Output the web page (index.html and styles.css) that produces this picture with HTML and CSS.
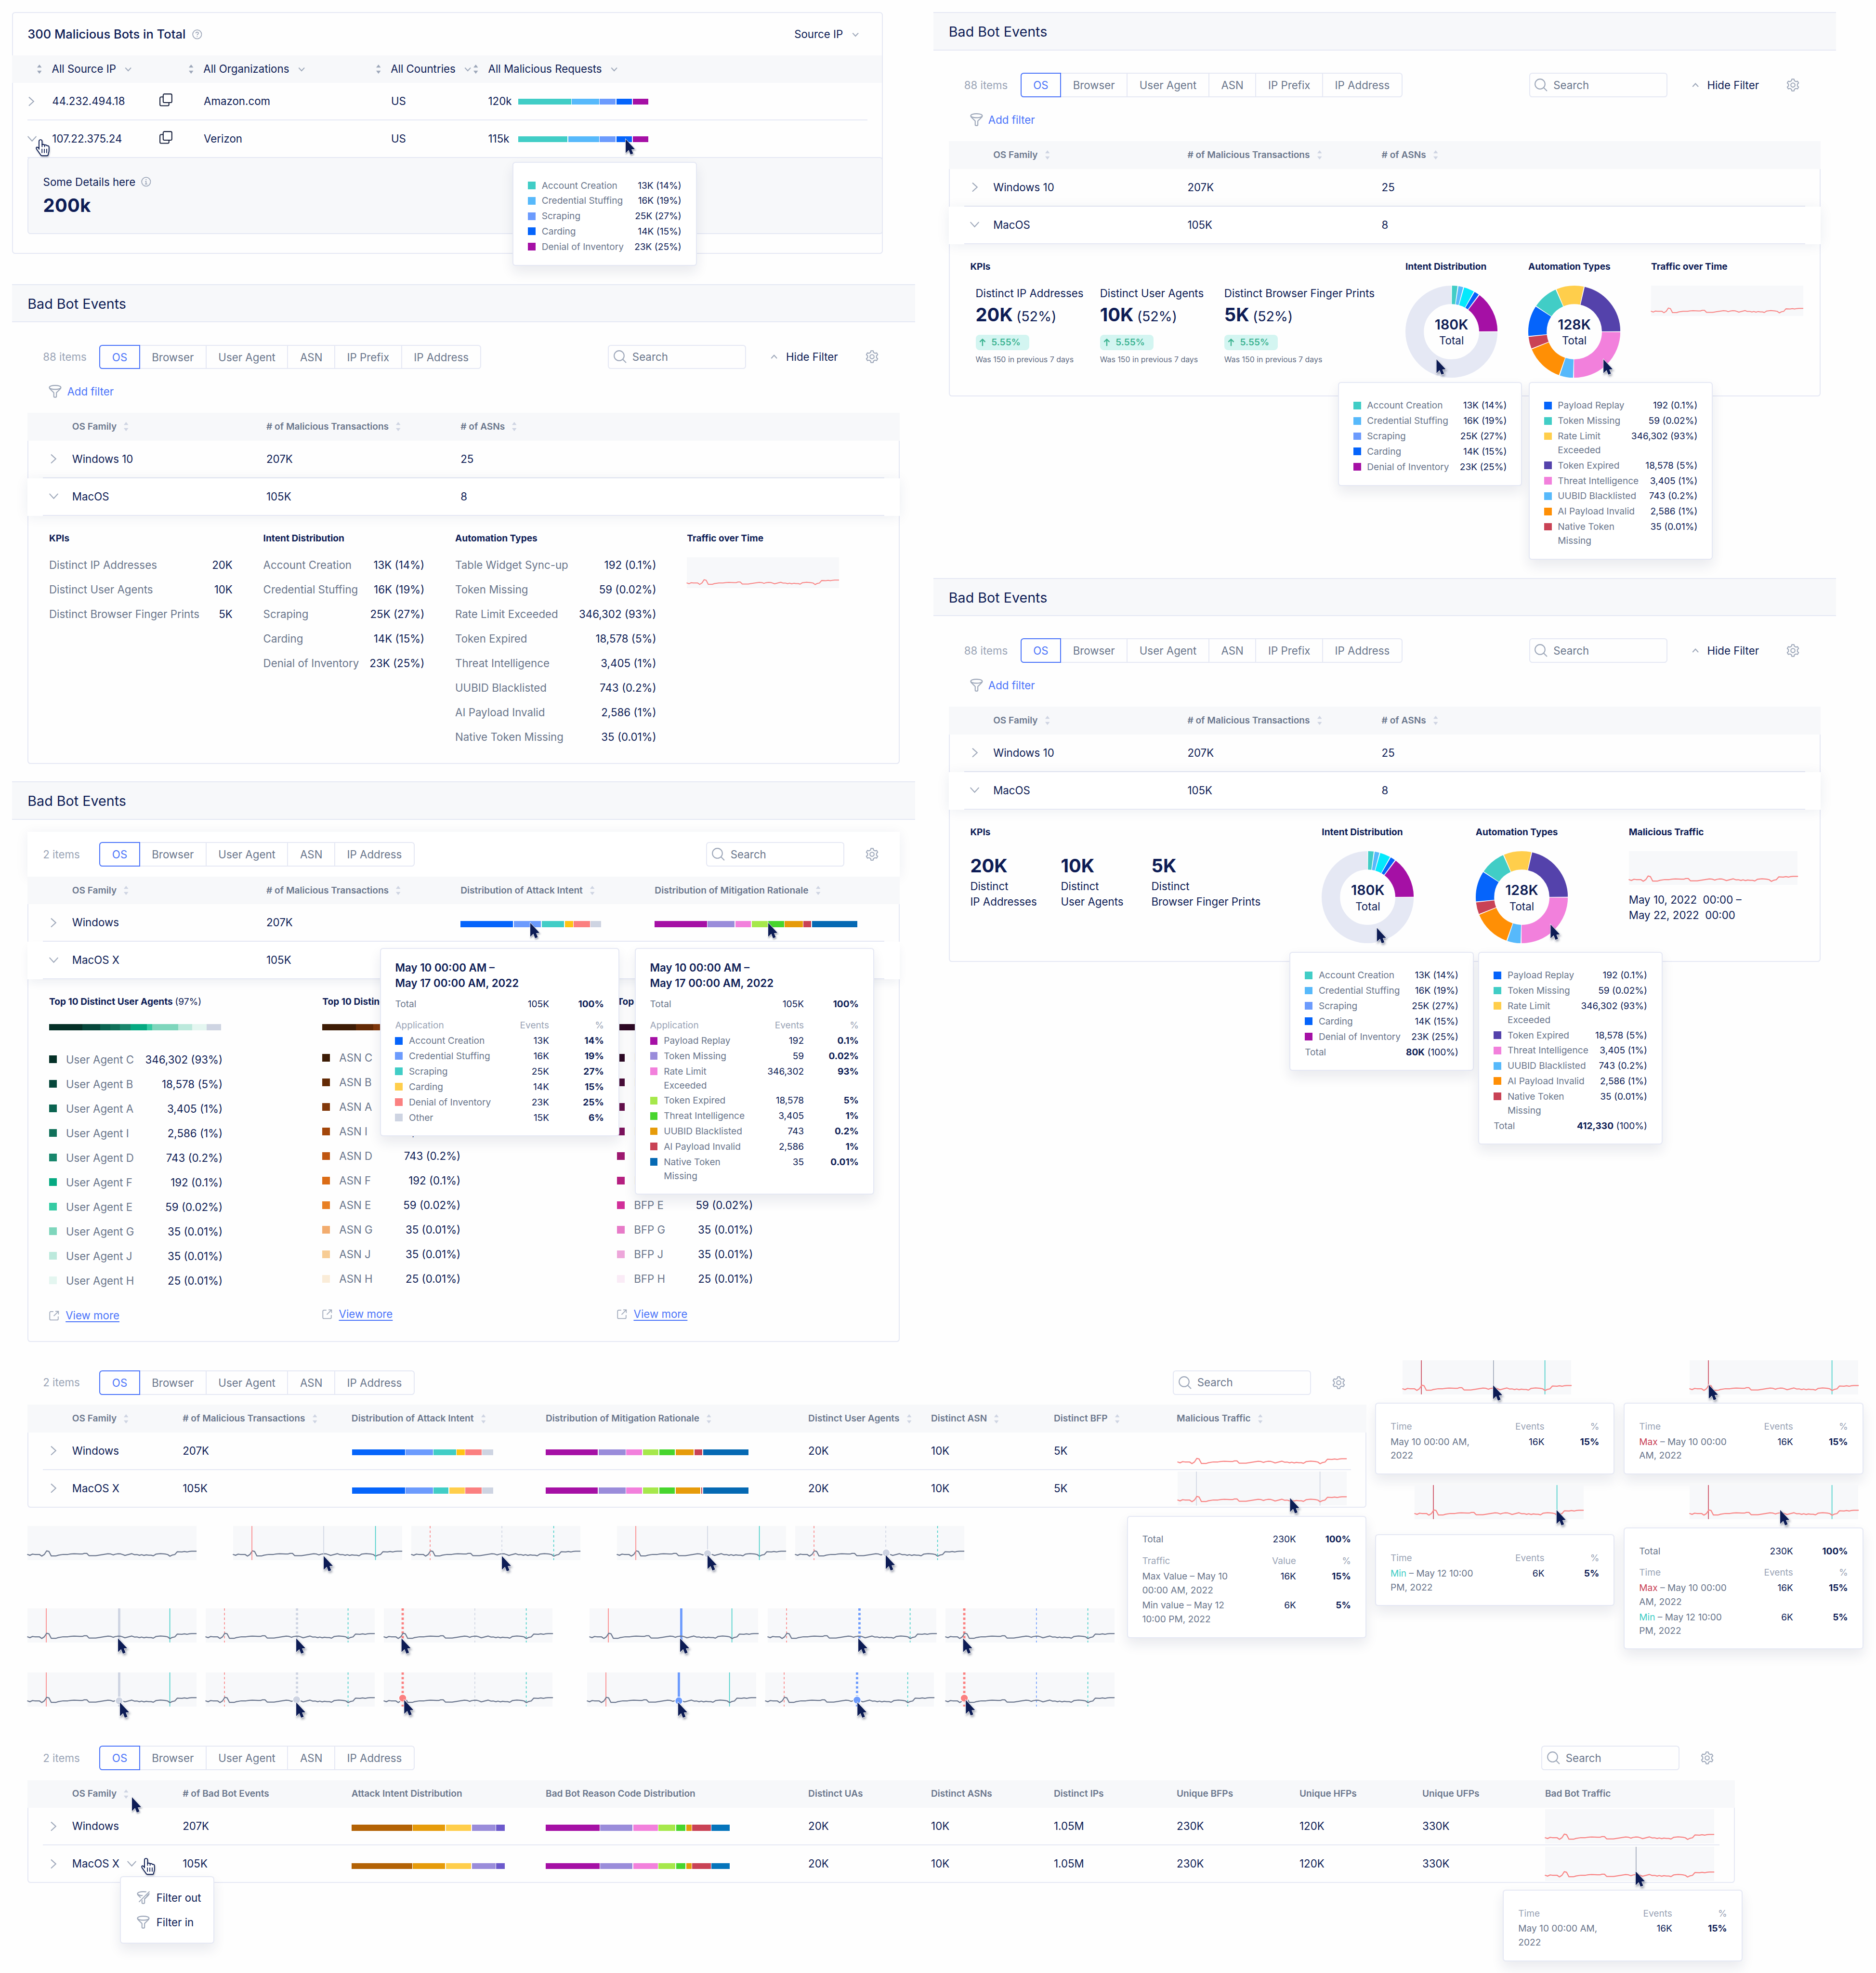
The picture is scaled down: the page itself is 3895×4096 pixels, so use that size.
FILE: index.html
```html
<!DOCTYPE html>
<html lang="en">
<head>
<meta charset="utf-8">
<title>Bad Bot Events</title>
<link rel="stylesheet" href="styles.css">
</head>
<body>
<svg class="defs" aria-hidden="true">
  <symbol id="line" viewBox="0 0 1320 266" overflow="visible"><path fill="none" stroke-width="8.4" stroke-linejoin="round" d="M-2 221 0 222 19 229 38 220 56 222H93L112 235 132 222 150 194 168 199 186 234H222L241 228 279 222H316L336 219 364 217 409 219H429L444 214H464L482 232H534L564 227 629 217 652 219 670 226 688 220 709 217 729 218 744 223 762 230 816 216 836 224 856 223 876 229 892 224 911 230 929 225 947 228H967L984 233 1004 220 1040 216 1076 219 1096 223 1114 236 1132 227 1152 223 1171 201 1207 203 1227 199 1247 203 1264 199 1284 197H1322"/></symbol>
  <symbol id="arrow" viewBox="0 0 12 20" overflow="visible"><path d="M0 0 12 12.9 7.6 13.3 9.8 18.7 6.3 20 4 14.2 0 18Z"/></symbol>
  <symbol id="hand" viewBox="0 0 18 22" overflow="visible"><path fill="#fff" stroke="#0b1b50" stroke-width="1.2" stroke-linejoin="round" stroke-linecap="round" d="M4.4 13V2.7a2 2 0 0 1 4 0V7.4c.6-1 2.8-.9 3.3.5.8-.9 2.6-.6 3 .7 1.3-.4 2.7.2 2.700 1.500V15c0 1.800-.8 3-1 4.500-.1 1.200-.7 2-1.600 2H8.300c-.8 0-1.300-.3-1.700-1L1.300 13c-.8-1.300-.6-2.100 0-2.500.8-.4 1.700 0 3.100 1.700"/><path fill="none" stroke="#0b1b50" stroke-width="1.1" stroke-linecap="round" d="M8.400 7V9.800M8.300 13V17.500M11.400 13V17.500M14.400 13V17.500M11.700 8V9.800"/></symbol>
  <symbol id="right" viewBox="0 0 8 12" overflow="visible"><path d="M1 .7 6.800 6 1 11.300"/></symbol>
  <symbol id="down" viewBox="0 0 12 8" overflow="visible"><path d="M.8 1 6 6.700 11.200 1"/></symbol>
  <symbol id="small-down" viewBox="0 0 9 6" overflow="visible"><path d="M.8 1 4.500 5 8.200 1"/></symbol>
  <symbol id="small-up" viewBox="0 0 9 6" overflow="visible"><path d="M.8 5 4.500 1 8.200 5"/></symbol>
  <symbol id="sort" viewBox="0 0 6 12"><path stroke="none" d="M3 0 6 4H0ZM3 12 0 8H6Z"/></symbol>
  <symbol id="gear" viewBox="-8.500 -8.500 17 17"><path stroke-linejoin="round" d="M-1.900-5.600-1.400-7.700H1.400L1.900-5.600 3.900-4.450 5.970-5.060 7.370-2.640 5.800-1.160V1.160L7.370 2.640 5.970 5.060 3.900 4.450 1.900 5.600 1.400 7.700H-1.400L-1.900 5.600-3.900 4.450-5.970 5.060-7.370 2.640-5.800 1.160V-1.160L-7.370-2.640-5.970-5.060-3.900-4.450Z"/><circle r="2.700"/></symbol>
  <symbol id="search" viewBox="0 0 17 17"><circle cx="7.200" cy="7.200" r="6.500"/><path d="M11.800 11.800 16.300 16.300"/></symbol>
  <symbol id="funnel" viewBox="0 0 16.500 17"><ellipse cx="8.200" cy="3.300" rx="7.500" ry="2.600"/><path d="M.7 3.400c0 .9.5 1.500 1.200 2.200l4.600 4.600v5c0 .6.3.9.8.9h1.800c.5 0 .8-.3.8-.9v-5l4.600-4.600c.7-.7 1.200-1.300 1.200-2.200"/></symbol>
  <symbol id="funnel-off" viewBox="0 0 16.500 17" overflow="visible"><ellipse cx="8.200" cy="3.300" rx="7.500" ry="2.600"/><path d="M.7 3.400c0 .9.5 1.500 1.200 2.200l4.600 4.600v5c0 .6.3.9.8.9h1.800c.5 0 .8-.3.8-.9v-5l4.600-4.600c.7-.7 1.200-1.300 1.200-2.200"/><path stroke="#fff" stroke-width="3.600" d="M2.200 13.500 15.700 0"/><path d="M2.600 14.200 16.400.4M9.900 10.200l4.600-4.600"/></symbol>
  <symbol id="copy" viewBox="0 0 17 17"><rect x="4.900" y=".7" width="11.300" height="11.200" rx="1.600"/><path d="M4.900 4.500H2.300C1.400 4.500.7 5.200.7 6.100v8.300c0 .9.7 1.600 1.600 1.600h8.500c.9 0 1.600-.7 1.600-1.600V12"/></symbol>
  <symbol id="help" viewBox="0 0 13 13"><circle cx="6.500" cy="6.500" r="5.800"/><path d="M4.800 5.200C4.800 3 8.200 3 8.200 5.100 8.200 6.300 6.500 6.300 6.500 7.700M6.500 9V10"/></symbol>
  <symbol id="info" viewBox="0 0 13 13"><circle cx="6.500" cy="6.500" r="5.800"/><path d="M6.500 3.200V4.400M5.200 6H6.500V9.400M5 9.500H8"/></symbol>
  <symbol id="open" viewBox="0 0 13 13"><path d="M5.500 1.200H2.200c-.8 0-1.400.6-1.400 1.400v8.200c0 .8.6 1.400 1.400 1.400h8.200c.8 0 1.400-.6 1.400-1.400V7.500M8.200.8H12.200V4.800M12 1 6 7"/></symbol>
  <symbol id="up" viewBox="0 0 10 10"><path d="M5 9.500V1M1.500 4.300 5 .9 8.500 4.300"/></symbol>
  <symbol id="donut-intent" viewBox="0 0 120 120">
    <g fill="none" stroke-width="24" transform="rotate(-90 60 60)">
      <circle cx="60" cy="60" r="48" pathLength="360" stroke="#e5e8f4" stroke-dasharray="268.800 91.200" stroke-dashoffset="-90.600"/>
      <circle cx="60" cy="60" r="48" pathLength="360" stroke="#41cdc6" stroke-dasharray="7 353" stroke-dashoffset="-.6"/>
      <circle cx="60" cy="60" r="48" pathLength="360" stroke="#57b9fb" stroke-dasharray="6 354" stroke-dashoffset="-8.800"/>
      <circle cx="60" cy="60" r="48" pathLength="360" stroke="#05e9fc" stroke-dasharray="13 347" stroke-dashoffset="-16"/>
      <circle cx="60" cy="60" r="48" pathLength="360" stroke="#0564fb" stroke-dasharray="6 354" stroke-dashoffset="-30.200"/>
      <circle cx="60" cy="60" r="48" pathLength="360" stroke="#a510a5" stroke-dasharray="51.800 308.200" stroke-dashoffset="-37.600"/>
    </g>
  </symbol>
  <symbol id="donut-types" viewBox="0 0 120 120">
    <g fill="none" stroke-width="24" transform="rotate(-90 60 60)">
      <circle cx="60" cy="60" r="48" pathLength="360" stroke="#f280dc" stroke-dasharray="89.800 270.200" stroke-dashoffset="-90.600"/>
      <circle cx="60" cy="60" r="48" pathLength="360" stroke="#57b9fb" stroke-dasharray="16.800 343.200" stroke-dashoffset="-181.600"/>
      <circle cx="60" cy="60" r="48" pathLength="360" stroke="#ff8f05" stroke-dasharray="47.800 312.200" stroke-dashoffset="-199.600"/>
      <circle cx="60" cy="60" r="48" pathLength="360" stroke="#c94255" stroke-dasharray="14.800 345.200" stroke-dashoffset="-248.600"/>
      <circle cx="60" cy="60" r="48" pathLength="360" stroke="#0564fb" stroke-dasharray="38.400 321.600" stroke-dashoffset="-264.600"/>
      <circle cx="60" cy="60" r="48" pathLength="360" stroke="#41cdc6" stroke-dasharray="31.800 328.200" stroke-dashoffset="-304.200"/>
      <circle cx="60" cy="60" r="48" pathLength="360" stroke="#ffce4b" stroke-dasharray="34.700 325.300" stroke-dashoffset="-337.200"/>
      <circle cx="60" cy="60" r="48" pathLength="360" stroke="#5442ab" stroke-dasharray="76.300 283.700" stroke-dashoffset="-13.100"/>
    </g>
  </symbol>
</svg>

<main class="canvas">
<div class="columns">
  <div class="column">

    <section class="bots">
      <header class="bots-title"><b>300 Malicious Bots in Total</b><svg class="ic i13"><use href="#help"/></svg><span class="select">Source IP<svg class="ic i-sd"><use href="#small-down"/></svg></span></header>
      <div class="bots-head">
        <span><svg class="ic i-sort"><use href="#sort"/></svg>All Source IP<svg class="ic i-sd"><use href="#small-down"/></svg></span>
        <span><svg class="ic i-sort"><use href="#sort"/></svg>All Organizations<svg class="ic i-sd"><use href="#small-down"/></svg></span>
        <span><svg class="ic i-sort"><use href="#sort"/></svg>All Countries<svg class="ic i-sd"><use href="#small-down"/></svg></span>
        <span><svg class="ic i-sort"><use href="#sort"/></svg>All Malicious Requests<svg class="ic i-sd"><use href="#small-down"/></svg></span>
      </div>
      <div class="bots-row">
        <svg class="ic i-right"><use href="#right"/></svg><span>44.232.494.18</span><svg class="ic i17 dark"><use href="#copy"/></svg><span>Amazon.com</span><span>US</span>
        <span class="req">120k<span class="bar"><i class="teal" style="width:6.85rem"></i><i class="sky" style="width:3.55rem"></i><i class="peri" style="width:2.05rem"></i><i class="blue" style="width:2.05rem"></i><i class="purple" style="width:2.05rem"></i></span></span>
      </div>
      <div class="bots-row">
        <svg class="ic i-down"><use href="#down"/></svg><span>107.22.375.24</span><svg class="ic i17 dark"><use href="#copy"/></svg><span>Verizon</span><span>US</span>
        <span class="req">115k<span class="bar"><i class="teal" style="width:6.4rem"></i><i class="sky" style="width:4rem"></i><i class="peri" style="width:2.05rem"></i><i class="blue" style="width:2.05rem"></i><i class="purple" style="width:2.05rem"></i></span></span>
      </div>
      <div class="bots-detail"><p>Some Details here<svg class="ic i13"><use href="#info"/></svg></p><strong>200k</strong></div>
      <svg class="hand at-bots-hand"><use href="#hand"/></svg>
      <div class="tip tip-s at-bots-tip">
        <p><i class="teal"></i><span>Account Creation</span><em>13K (14%)</em></p>
        <p><i class="sky"></i><span>Credential Stuffing</span><em>16K (19%)</em></p>
        <p><i class="peri"></i><span>Scraping</span><em>25K (27%)</em></p>
        <p><i class="blue"></i><span>Carding</span><em>14K (15%)</em></p>
        <p><i class="purple"></i><span>Denial of Inventory</span><em>23K (25%)</em></p>
      </div>
      <svg class="arrow at-bots-arrow"><use href="#arrow"/></svg>
    </section>

    <section class="board board-lists">
      <h2 class="band">Bad Bot Events</h2>
      <div class="toolbar">
        <span class="count">88 items</span>
        <nav class="tabs"><a class="on">OS</a><a>Browser</a><a>User Agent</a><a>ASN</a><a>IP Prefix</a><a>IP Address</a></nav>
        <span class="find"><svg class="ic i17"><use href="#search"/></svg>Search</span>
        <span class="hide"><svg class="ic i-sd"><use href="#small-up"/></svg>Hide Filter</span>
        <svg class="ic i17 gear"><use href="#gear"/></svg>
      </div>
      <div class="add"><svg class="ic i17"><use href="#funnel"/></svg>Add filter</div>
      <div class="table cols-a">
        <div class="head"><span></span><span>OS Family<svg class="ic i-sort"><use href="#sort"/></svg></span><span># of Malicious Transactions<svg class="ic i-sort"><use href="#sort"/></svg></span><span># of ASNs<svg class="ic i-sort"><use href="#sort"/></svg></span></div>
        <div class="body">
          <div class="row"><svg class="ic i-right"><use href="#right"/></svg><span>Windows 10</span><span>207K</span><span>25</span></div>
          <div class="open"><div class="row"><svg class="ic i-down"><use href="#down"/></svg><span>MacOS</span><span>105K</span><span>8</span></div></div>
          <div class="detail lists">
            <div class="kv"><h3>KPIs</h3><p>Distinct IP Addresses<em>20K</em></p><p>Distinct User Agents<em>10K</em></p><p>Distinct Browser Finger Prints<em>5K</em></p></div>
            <div class="kv kv-b"><h3>Intent Distribution</h3><p>Account Creation<em>13K (14%)</em></p><p>Credential Stuffing<em>16K (19%)</em></p><p>Scraping<em>25K (27%)</em></p><p>Carding<em>14K (15%)</em></p><p>Denial of Inventory<em>23K (25%)</em></p></div>
            <div class="kv kv-c"><h3>Automation Types</h3><p>Table Widget Sync-up<em>192 (0.1%)</em></p><p>Token Missing<em>59 (0.02%)</em></p><p>Rate Limit Exceeded<em>346,302 (93%)</em></p><p>Token Expired<em>18,578 (5%)</em></p><p>Threat Intelligence<em>3,405 (1%)</em></p><p>UUBID Blacklisted<em>743 (0.2%)</em></p><p>AI Payload Invalid<em>2,586 (1%)</em></p><p>Native Token Missing<em>35 (0.01%)</em></p></div>
            <div><h3>Traffic over Time</h3><svg class="spark small coral-line" viewBox="0 0 220 44.400"><use href="#line" width="220" height="44.400"/></svg></div>
          </div>
        </div>
      </div>
    </section>

    <section class="board board-top10">
      <h2 class="band">Bad Bot Events</h2>
      <div class="sticky">
        <div class="toolbar">
          <span class="count">2 items</span>
          <nav class="tabs"><a class="on">OS</a><a>Browser</a><a>User Agent</a><a>ASN</a><a>IP Address</a></nav>
          <span class="find"><svg class="ic i17"><use href="#search"/></svg>Search</span>
          <svg class="ic i17 gear"><use href="#gear"/></svg>
        </div>
      </div>
      <div class="table cols-a">
        <div class="head"><span></span><span>OS Family<svg class="ic i-sort"><use href="#sort"/></svg></span><span># of Malicious Transactions<svg class="ic i-sort"><use href="#sort"/></svg></span><span>Distribution of Attack Intent<svg class="ic i-sort"><use href="#sort"/></svg></span><span>Distribution of Mitigation Rationale<svg class="ic i-sort"><use href="#sort"/></svg></span></div>
        <div class="body">
          <div class="row"><svg class="ic i-right"><use href="#right"/></svg><span>Windows</span><span>207K</span>
            <span class="bar"><i class="blue" style="width:6.85rem"></i><i class="peri" style="width:3.55rem"></i><i class="teal" style="width:2.9rem"></i><i class="gold" style="width:1.05rem"></i><i class="coral" style="width:2.1rem"></i><i class="mist" style="width:1.4rem"></i></span>
            <span class="bar"><i class="purple" style="width:6.8rem"></i><i class="lav" style="width:3.5rem"></i><i class="pink" style="width:2.05rem"></i><i class="lime" style="width:2.05rem"></i><i class="green" style="width:2.05rem"></i><i class="amber" style="width:2.35rem"></i><i class="red" style="width:1rem"></i><i class="ocean" style="width:5.9rem"></i></span></div>
          <div class="open"><div class="row"><svg class="ic i-down"><use href="#down"/></svg><span>MacOS X</span><span>105K</span></div></div>
          <div class="detail top10">
            <div class="rank"><h3>Top 10 Distinct User Agents <small>(97%)</small></h3>
              <span class="bar flush"><i style="width:4.36rem;background:#043027"></i><i style="width:2.3rem;background:#06473b"></i><i style="width:1.3rem;background:#0a6350"></i><i style="width:1.3rem;background:#107059"></i><i style="width:1.35rem;background:#18866c"></i><i style="width:2.15rem;background:#05a981"></i><i style="width:.65rem;background:#35cba3"></i><i style="width:3.4rem;background:#7ed6bc"></i><i style="width:1.85rem;background:#bce9dc"></i><i style="width:1.85rem;background:#e4f6f0"></i><i style="width:1.9rem;background:#ced4e2"></i></span>
              <p><i style="background:#043027"></i>User Agent C<em>346,302 (93%)</em></p><p><i style="background:#06473b"></i>User Agent B<em>18,578 (5%)</em></p><p><i style="background:#0a6350"></i>User Agent A<em>3,405 (1%)</em></p><p><i style="background:#107059"></i>User Agent I<em>2,586 (1%)</em></p><p><i style="background:#18866c"></i>User Agent D<em>743 (0.2%)</em></p><p><i style="background:#05a981"></i>User Agent F<em>192 (0.1%)</em></p><p><i style="background:#35cba3"></i>User Agent E<em>59 (0.02%)</em></p><p><i style="background:#7ed6bc"></i>User Agent G<em>35 (0.01%)</em></p><p><i style="background:#bce9dc"></i>User Agent J<em>35 (0.01%)</em></p><p><i style="background:#e4f6f0"></i>User Agent H<em>25 (0.01%)</em></p>
              <a class="more"><svg class="ic i13"><use href="#open"/></svg><u>View more</u></a></div>
            <div class="rank rank-b"><h3>Top 10 Distinct ASNs <small>(97%)</small></h3>
              <span class="bar flush"><i style="width:4.36rem;background:#3d1c05"></i><i style="width:2.3rem;background:#632a05"></i><i style="width:1.3rem;background:#82380a"></i><i style="width:1.3rem;background:#a34a0a"></i></span>
              <p><i style="background:#3d1c05"></i>ASN C<em>346,302 (93%)</em></p><p><i style="background:#632a05"></i>ASN B<em>18,578 (5%)</em></p><p><i style="background:#82380a"></i>ASN A<em>3,405 (1%)</em></p><p><i style="background:#a3460a"></i>ASN I<em>2,586 (1%)</em></p><p><i style="background:#bf5610"></i>ASN D<em>743 (0.2%)</em></p><p><i style="background:#db6c16"></i>ASN F<em>192 (0.1%)</em></p><p><i style="background:#e88024"></i>ASN E<em>59 (0.02%)</em></p><p><i style="background:#f2ac6e"></i>ASN G<em>35 (0.01%)</em></p><p><i style="background:#f7cc94"></i>ASN J<em>35 (0.01%)</em></p><p><i style="background:#faecd8"></i>ASN H<em>25 (0.01%)</em></p>
              <a class="more"><svg class="ic i13"><use href="#open"/></svg><u>View more</u></a></div>
            <div class="rank rank-c"><h3>Top 10 Distinct BFPs <small>(97%)</small></h3>
              <span class="bar flush"><i style="width:4.36rem;background:#2e0a24"></i><i style="width:2.3rem;background:#4a0d38"></i></span>
              <p><i style="background:#2e0a24"></i>BFP C<em>346,302 (93%)</em></p><p><i style="background:#4a0d38"></i>BFP B<em>18,578 (5%)</em></p><p><i style="background:#640f4a"></i>BFP A<em>3,405 (1%)</em></p><p><i style="background:#7e125c"></i>BFP I<em>2,586 (1%)</em></p><p><i style="background:#9d186f"></i>BFP D<em>743 (0.2%)</em></p><p><i style="background:#b51f80"></i>BFP F<em>192 (0.1%)</em></p><p><i style="background:#d12f99"></i>BFP E<em>59 (0.02%)</em></p><p><i style="background:#e77bc8"></i>BFP G<em>35 (0.01%)</em></p><p><i style="background:#eda6da"></i>BFP J<em>35 (0.01%)</em></p><p><i style="background:#faebf6"></i>BFP H<em>25 (0.01%)</em></p>
              <a class="more"><svg class="ic i13"><use href="#open"/></svg><u>View more</u></a></div>
          </div>
        </div>
      </div>
      <div class="tip at-top10-a">
        <h4>May 10 00:00 AM –<br>May 17 00:00 AM, 2022</h4>
        <p class="total"><span>Total</span><em>105K</em><b>100%</b></p>
        <p class="th"><span>Application</span><em>Events</em><b>%</b></p>
        <p><i class="blue"></i><span>Account Creation</span><em>13K</em><b>14%</b></p>
        <p><i class="peri"></i><span>Credential Stuffing</span><em>16K</em><b>19%</b></p>
        <p><i class="teal"></i><span>Scraping</span><em>25K</em><b>27%</b></p>
        <p><i class="yellow"></i><span>Carding</span><em>14K</em><b>15%</b></p>
        <p><i class="coral"></i><span>Denial of Inventory</span><em>23K</em><b>25%</b></p>
        <p><i class="mist"></i><span>Other</span><em>15K</em><b>6%</b></p>
      </div>
      <div class="tip at-top10-b">
        <h4>May 10 00:00 AM –<br>May 17 00:00 AM, 2022</h4>
        <p class="total"><span>Total</span><em>105K</em><b>100%</b></p>
        <p class="th"><span>Application</span><em>Events</em><b>%</b></p>
        <p><i class="purple"></i><span>Payload Replay</span><em>192</em><b>0.1%</b></p>
        <p><i class="lav"></i><span>Token Missing</span><em>59</em><b>0.02%</b></p>
        <p><i class="pink"></i><span>Rate Limit<br>Exceeded</span><em>346,302</em><b>93%</b></p>
        <p><i class="lime"></i><span>Token Expired</span><em>18,578</em><b>5%</b></p>
        <p><i class="green"></i><span>Threat Intelligence</span><em>3,405</em><b>1%</b></p>
        <p><i class="amber"></i><span>UUBID Blacklisted</span><em>743</em><b>0.2%</b></p>
        <p><i class="red"></i><span>AI Payload Invalid</span><em>2,586</em><b>1%</b></p>
        <p><i class="ocean"></i><span>Native Token<br>Missing</span><em>35</em><b>0.01%</b></p>
      </div>
      <svg class="arrow at-top10-c"><use href="#arrow"/></svg>
      <svg class="arrow at-top10-d"><use href="#arrow"/></svg>
    </section>
  </div>

  <div class="column">
    <section class="board">
      <h2 class="band">Bad Bot Events</h2>
      <div class="toolbar">
        <span class="count">88 items</span>
        <nav class="tabs"><a class="on">OS</a><a>Browser</a><a>User Agent</a><a>ASN</a><a>IP Prefix</a><a>IP Address</a></nav>
        <span class="find"><svg class="ic i17"><use href="#search"/></svg>Search</span>
        <span class="hide"><svg class="ic i-sd"><use href="#small-up"/></svg>Hide Filter</span>
        <svg class="ic i17 gear"><use href="#gear"/></svg>
      </div>
      <div class="add"><svg class="ic i17"><use href="#funnel"/></svg>Add filter</div>
      <div class="table cols-a">
        <div class="head"><span></span><span>OS Family<svg class="ic i-sort"><use href="#sort"/></svg></span><span># of Malicious Transactions<svg class="ic i-sort"><use href="#sort"/></svg></span><span># of ASNs<svg class="ic i-sort"><use href="#sort"/></svg></span></div>
        <div class="body">
          <div class="row"><svg class="ic i-right"><use href="#right"/></svg><span>Windows 10</span><span>207K</span><span>25</span></div>
          <div class="open"><div class="row"><svg class="ic i-down"><use href="#down"/></svg><span>MacOS</span><span>105K</span><span>8</span></div></div>
          <div class="detail charts">
            <div><h3>KPIs</h3><div class="kpis">
              <div class="kpi"><p>Distinct IP Addresses</p><strong>20K<small>(52%)</small></strong><span class="badge"><svg class="ic i-up"><use href="#up"/></svg>5.55%</span><small class="was">Was 150 in previous 7 days</small></div>
              <div class="kpi"><p>Distinct User Agents</p><strong>10K<small>(52%)</small></strong><span class="badge"><svg class="ic i-up"><use href="#up"/></svg>5.55%</span><small class="was">Was 150 in previous 7 days</small></div>
              <div class="kpi"><p>Distinct Browser Finger Prints</p><strong>5K<small>(52%)</small></strong><span class="badge"><svg class="ic i-up"><use href="#up"/></svg>5.55%</span><small class="was">Was 150 in previous 7 days</small></div>
            </div></div>
            <div><h3>Intent Distribution</h3><div class="donut"><svg viewBox="0 0 120 120"><use href="#donut-intent"/><use class="cur" href="#arrow" x="40.500" y="96" width="12" height="20"/></svg><p><b>180K</b>Total</p></div></div>
            <div><h3>Automation Types</h3><div class="donut"><svg viewBox="0 0 120 120"><use href="#donut-types"/><use class="cur" href="#arrow" x="98" y="96" width="12" height="20"/></svg><p><b>128K</b>Total</p></div></div>
            <div><h3>Traffic over Time</h3><svg class="spark small coral-line" viewBox="0 0 220 44.400"><use href="#line" width="220" height="44.400"/></svg></div>
          </div>
        </div>
      </div>
      <div class="tip tip-s at-charts-a">
        <p><i class="teal"></i><span>Account Creation</span><em>13K (14%)</em></p>
        <p><i class="sky"></i><span>Credential Stuffing</span><em>16K (19%)</em></p>
        <p><i class="peri"></i><span>Scraping</span><em>25K (27%)</em></p>
        <p><i class="blue"></i><span>Carding</span><em>14K (15%)</em></p>
        <p><i class="purple"></i><span>Denial of Inventory</span><em>23K (25%)</em></p>
      </div>
      <div class="tip tip-s at-charts-b">
        <p><i class="blue"></i><span>Payload Replay</span><em>192 (0.1%)</em></p>
        <p><i class="teal"></i><span>Token Missing</span><em>59 (0.02%)</em></p>
        <p><i class="yellow"></i><span>Rate Limit<br>Exceeded</span><em>346,302 (93%)</em></p>
        <p><i class="indigo"></i><span>Token Expired</span><em>18,578 (5%)</em></p>
        <p><i class="pink"></i><span>Threat Intelligence</span><em>3,405 (1%)</em></p>
        <p><i class="sky"></i><span>UUBID Blacklisted</span><em>743 (0.2%)</em></p>
        <p><i class="orange"></i><span>AI Payload Invalid</span><em>2,586 (1%)</em></p>
        <p><i class="red"></i><span>Native Token<br>Missing</span><em>35 (0.01%)</em></p>
      </div>
    </section>

    <section class="board board-compact">
      <h2 class="band">Bad Bot Events</h2>
      <div class="toolbar">
        <span class="count">88 items</span>
        <nav class="tabs"><a class="on">OS</a><a>Browser</a><a>User Agent</a><a>ASN</a><a>IP Prefix</a><a>IP Address</a></nav>
        <span class="find"><svg class="ic i17"><use href="#search"/></svg>Search</span>
        <span class="hide"><svg class="ic i-sd"><use href="#small-up"/></svg>Hide Filter</span>
        <svg class="ic i17 gear"><use href="#gear"/></svg>
      </div>
      <div class="add"><svg class="ic i17"><use href="#funnel"/></svg>Add filter</div>
      <div class="table cols-a">
        <div class="head"><span></span><span>OS Family<svg class="ic i-sort"><use href="#sort"/></svg></span><span># of Malicious Transactions<svg class="ic i-sort"><use href="#sort"/></svg></span><span># of ASNs<svg class="ic i-sort"><use href="#sort"/></svg></span></div>
        <div class="body">
          <div class="row"><svg class="ic i-right"><use href="#right"/></svg><span>Windows 10</span><span>207K</span><span>25</span></div>
          <div class="open"><div class="row"><svg class="ic i-down"><use href="#down"/></svg><span>MacOS</span><span>105K</span><span>8</span></div></div>
          <div class="detail charts charts-b">
            <div><h3>KPIs</h3><div class="counts">
              <p><strong>20K</strong>Distinct<br>IP Addresses</p><p><strong>10K</strong>Distinct<br>User Agents</p><p><strong>5K</strong>Distinct<br>Browser Finger Prints</p>
            </div></div>
            <div><h3>Intent Distribution</h3><div class="donut"><svg viewBox="0 0 120 120"><use href="#donut-intent"/><use class="cur" href="#arrow" x="72" y="100" width="12" height="20"/></svg><p><b>180K</b>Total</p></div></div>
            <div><h3>Automation Types</h3><div class="donut"><svg viewBox="0 0 120 120"><use href="#donut-types"/><use class="cur" href="#arrow" x="97.500" y="95.500" width="12" height="20"/></svg><p><b>128K</b>Total</p></div></div>
            <div><h3>Malicious Traffic</h3><svg class="spark coral-line" viewBox="0 0 220 44.400"><use href="#line" width="220" height="44.400"/></svg><p class="range">May 10, 2022&nbsp; 00:00 –<br>May 22, 2022&nbsp; 00:00</p></div>
          </div>
        </div>
      </div>
      <div class="tip tip-s at-compact-a">
        <p><i class="teal"></i><span>Account Creation</span><em>13K (14%)</em></p>
        <p><i class="sky"></i><span>Credential Stuffing</span><em>16K (19%)</em></p>
        <p><i class="peri"></i><span>Scraping</span><em>25K (27%)</em></p>
        <p><i class="blue"></i><span>Carding</span><em>14K (15%)</em></p>
        <p><i class="purple"></i><span>Denial of Inventory</span><em>23K (25%)</em></p>
        <p><span>Total</span><em><strong>80K</strong> (100%)</em></p>
      </div>
      <div class="tip tip-s at-compact-b">
        <p><i class="blue"></i><span>Payload Replay</span><em>192 (0.1%)</em></p>
        <p><i class="teal"></i><span>Token Missing</span><em>59 (0.02%)</em></p>
        <p><i class="yellow"></i><span>Rate Limit<br>Exceeded</span><em>346,302 (93%)</em></p>
        <p><i class="indigo"></i><span>Token Expired</span><em>18,578 (5%)</em></p>
        <p><i class="pink"></i><span>Threat Intelligence</span><em>3,405 (1%)</em></p>
        <p><i class="sky"></i><span>UUBID Blacklisted</span><em>743 (0.2%)</em></p>
        <p><i class="orange"></i><span>AI Payload Invalid</span><em>2,586 (1%)</em></p>
        <p><i class="red"></i><span>Native Token<br>Missing</span><em>35 (0.01%)</em></p>
        <p><span>Total</span><em><strong>412,330</strong> (100%)</em></p>
      </div>
    </section>
  </div>
</div>

<div class="wide">
  <div class="wide-main">
    <section class="flat">
      <div class="toolbar">
        <span class="count">2 items</span>
        <nav class="tabs"><a class="on">OS</a><a>Browser</a><a>User Agent</a><a>ASN</a><a>IP Address</a></nav>
        <span class="find"><svg class="ic i17"><use href="#search"/></svg>Search</span>
        <svg class="ic i17 gear"><use href="#gear"/></svg>
      </div>
      <div class="table cols-b">
        <div class="head"><span></span><span>OS Family<svg class="ic i-sort"><use href="#sort"/></svg></span><span># of Malicious Transactions<svg class="ic i-sort"><use href="#sort"/></svg></span><span>Distribution of Attack Intent<svg class="ic i-sort"><use href="#sort"/></svg></span><span>Distribution of Mitigation Rationale<svg class="ic i-sort"><use href="#sort"/></svg></span><span>Distinct User Agents<svg class="ic i-sort"><use href="#sort"/></svg></span><span>Distinct ASN<svg class="ic i-sort"><use href="#sort"/></svg></span><span>Distinct BFP<svg class="ic i-sort"><use href="#sort"/></svg></span><span>Malicious Traffic<svg class="ic i-sort"><use href="#sort"/></svg></span></div>
        <div class="body">
          <div class="row"><svg class="ic i-right"><use href="#right"/></svg><span>Windows</span><span>207K</span>
            <span class="bar in1"><i class="blue" style="width:6.85rem"></i><i class="peri" style="width:3.55rem"></i><i class="teal" style="width:2.9rem"></i><i class="gold" style="width:1.05rem"></i><i class="coral" style="width:2.1rem"></i><i class="mist" style="width:1.4rem"></i></span>
            <span class="bar"><i class="purple" style="width:6.8rem"></i><i class="lav" style="width:3.5rem"></i><i class="pink" style="width:2.05rem"></i><i class="lime" style="width:2.05rem"></i><i class="green" style="width:2.05rem"></i><i class="amber" style="width:2.35rem"></i><i class="red" style="width:1rem"></i><i class="ocean" style="width:5.9rem"></i></span>
            <span>20K</span><span>10K</span><span>5K</span>
            <svg class="spark bare coral-line" viewBox="0 0 220 44.400"><use href="#line" width="220" height="44.400"/></svg></div>
          <div class="row"><svg class="ic i-right"><use href="#right"/></svg><span>MacOS X</span><span>105K</span>
            <span class="bar low in1"><i class="blue" style="width:6.85rem"></i><i class="peri" style="width:3.55rem"></i><i class="teal" style="width:1.95rem"></i><i class="yellow" style="width:2rem"></i><i class="coral" style="width:2.1rem"></i><i class="mist" style="width:1.4rem"></i></span>
            <span class="bar low"><i class="purple" style="width:6.8rem"></i><i class="lav" style="width:3.5rem"></i><i class="pink" style="width:2.05rem"></i><i class="lime" style="width:2.05rem"></i><i class="green" style="width:2.05rem"></i><i class="amber" style="width:3.2rem"></i><i class="red" style="width:.15rem"></i><i class="ocean" style="width:5.9rem"></i></span>
            <span>20K</span><span>10K</span><span>5K</span>
            <svg class="spark coral-line" viewBox="0 0 220 44.400"><path class="m mist" d="M24.500 0V44.400M185.500 0V44.400"/><use href="#line" width="220" height="44.400"/><use class="cur" href="#arrow" x="146.500" y="34.500" width="12" height="20"/></svg></div>
        </div>
      </div>
      <div class="tip at-flat-tip">
        <p><span>Total</span><em>230K</em><b>100%</b></p>
        <p class="th"><span>Traffic</span><em>Value</em><b>%</b></p>
        <p><span>Max Value – May 10<br>00:00 AM, 2022</span><em>16K</em><b>15%</b></p>
        <p><span>Min value – May 12<br>10:00 PM, 2022</span><em>6K</em><b>5%</b></p>
      </div>
    </section>

    <div class="sparks sparks-a">
      <svg class="spark" viewBox="0 0 220 44.400"><use href="#line" width="220" height="44.400"/></svg>
      <svg class="spark apart" viewBox="0 0 220 44.400"><use href="#line" width="220" height="44.400"/><path class="m coral" d="M24.500 0V44.400"/><path class="m mist" d="M118 0V44.400"/><path class="m teal" d="M185.500 0V44.400"/><use class="cur" href="#arrow" x="118" y="39" width="12" height="20"/></svg>
      <svg class="spark" viewBox="0 0 220 44.400"><use href="#line" width="220" height="44.400"/><path class="m dash coral" d="M24.500 0V44.400"/><path class="m dash mist" d="M118 0V44.400"/><path class="m dash teal" d="M185.500 0V44.400"/><use class="cur" href="#arrow" x="118" y="39" width="12" height="20"/></svg>
      <svg class="spark apart" viewBox="0 0 220 44.400"><use href="#line" width="220" height="44.400"/><path class="m coral" d="M24.500 0V44.400"/><path class="m mist" d="M118 0V44.400"/><path class="m teal" d="M185.500 0V44.400"/><circle class="dot mist" cx="118" cy="36" r="5"/><use class="cur" href="#arrow" x="118" y="38" width="12" height="20"/></svg>
      <svg class="spark" viewBox="0 0 220 44.400"><use href="#line" width="220" height="44.400"/><path class="m dash coral" d="M24.500 0V44.400"/><path class="m dash mist" d="M118 0V44.400"/><path class="m dash teal" d="M185.500 0V44.400"/><circle class="dot mist" cx="118.500" cy="35" r="5"/><use class="cur" href="#arrow" x="118" y="38" width="12" height="20"/></svg>
    </div>
    <div class="sparks sparks-b">
      <svg class="spark" viewBox="0 0 220 44.400"><path class="m coral" d="M24.500 0V44.400"/><path class="m teal" d="M185.500 0V44.400"/><path class="m thick mist" d="M119.500 0V44.400"/><use href="#line" width="220" height="44.400"/><use class="cur" href="#arrow" x="118" y="39" width="12" height="20"/></svg>
      <svg class="spark" viewBox="0 0 220 44.400"><path class="m dash coral" d="M24.500 0V44.400"/><path class="m dash teal" d="M185.500 0V44.400"/><path class="m thick dash mist" d="M119 0V44.400"/><use href="#line" width="220" height="44.400"/><use class="cur" href="#arrow" x="118" y="39" width="12" height="20"/></svg>
      <svg class="spark" viewBox="0 0 220 44.400"><path class="m thick dash coral" d="M24.500 0V44.400"/><path class="m dash mist" d="M118.500 0V44.400"/><path class="m dash teal" d="M185.500 0V44.400"/><use href="#line" width="220" height="44.400"/><use class="cur" href="#arrow" x="23" y="39" width="12" height="20"/></svg>
      <svg class="spark apart" viewBox="0 0 220 44.400"><path class="m coral" d="M24.500 0V44.400"/><path class="m teal" d="M185.500 0V44.400"/><path class="m thick peri" d="M119.500 0V44.400"/><use href="#line" width="220" height="44.400"/><use class="cur" href="#arrow" x="118" y="39" width="12" height="20"/></svg>
      <svg class="spark" viewBox="0 0 220 44.400"><path class="m dash coral" d="M24.500 0V44.400"/><path class="m dash teal" d="M185.500 0V44.400"/><path class="m thick dash peri" d="M119.500 0V44.400"/><use href="#line" width="220" height="44.400"/><use class="cur" href="#arrow" x="118" y="39" width="12" height="20"/></svg>
      <svg class="spark" viewBox="0 0 220 44.400"><path class="m thick dash coral" d="M24.500 0V44.400"/><path class="m dash peri" d="M118.500 0V44.400"/><path class="m dash teal" d="M185.500 0V44.400"/><use href="#line" width="220" height="44.400"/><use class="cur" href="#arrow" x="23" y="39" width="12" height="20"/></svg>
    </div>
    <div class="sparks sparks-c">
      <svg class="spark" viewBox="0 0 220 44.400"><path class="m coral" d="M24.500 0V44.400"/><path class="m teal" d="M185.500 0V44.400"/><path class="m thick mist" d="M119.500 0V44.400"/><use href="#line" width="220" height="44.400"/><circle class="dot mist" cx="119.500" cy="37" r="5"/><use class="cur" href="#arrow" x="120.500" y="39" width="12" height="20"/></svg>
      <svg class="spark" viewBox="0 0 220 44.400"><path class="m dash coral" d="M24.500 0V44.400"/><path class="m dash teal" d="M185.500 0V44.400"/><path class="m thick dash mist" d="M119 0V44.400"/><use href="#line" width="220" height="44.400"/><circle class="dot mist" cx="118.500" cy="35.500" r="5"/><use class="cur" href="#arrow" x="118" y="39" width="12" height="20"/></svg>
      <svg class="spark" viewBox="0 0 220 44.400"><path class="m thick dash coral" d="M24.500 0V44.400"/><path class="m dash mist" d="M118.500 0V44.400"/><path class="m dash teal" d="M185.500 0V44.400"/><use href="#line" width="220" height="44.400"/><circle class="dot coral" cx="24.500" cy="33.500" r="5"/><use class="cur" href="#arrow" x="26.500" y="36" width="12" height="20"/></svg>
      <svg class="spark apart-c" viewBox="0 0 220 44.400"><path class="m coral" d="M24.500 0V44.400"/><path class="m teal" d="M185.500 0V44.400"/><path class="m thick peri" d="M119.500 0V44.400"/><use href="#line" width="220" height="44.400"/><circle class="dot peri" cx="119.500" cy="37" r="5"/><use class="cur" href="#arrow" x="118.500" y="39" width="12" height="20"/></svg>
      <svg class="spark" viewBox="0 0 220 44.400"><path class="m dash coral" d="M24.500 0V44.400"/><path class="m dash teal" d="M185.500 0V44.400"/><path class="m thick dash peri" d="M119.500 0V44.400"/><use href="#line" width="220" height="44.400"/><circle class="dot peri" cx="119.500" cy="36" r="5"/><use class="cur" href="#arrow" x="120" y="39" width="12" height="20"/></svg>
      <svg class="spark near-c" viewBox="0 0 220 44.400"><path class="m thick dash coral" d="M24.500 0V44.400"/><path class="m dash peri" d="M118.500 0V44.400"/><path class="m dash teal" d="M185.500 0V44.400"/><use href="#line" width="220" height="44.400"/><circle class="dot coral" cx="24.500" cy="33.500" r="5"/><use class="cur" href="#arrow" x="26.500" y="36" width="12" height="20"/></svg>
    </div>
  </div>

  <div class="samples">
    <div>
      <svg class="spark sh-a coral-line" viewBox="0 0 220 44.400"><path class="m red" d="M24.500 0V44.400"/><path class="m slate" d="M118.500 0V34"/><path class="m teal" d="M185.500 0V44.400"/><use href="#line" width="220" height="44.400"/><use class="cur" href="#arrow" x="118" y="32.500" width="12" height="20"/></svg>
      <div class="tip"><p class="th first"><span>Time</span><em>Events</em><b>%</b></p><p><span>May 10 00:00 AM,<br>2022</span><em>16K</em><b>15%</b></p></div>
      <svg class="spark sh-b coral-line" viewBox="0 0 220 44.400"><path class="m red" d="M24.500 0V44.400"/><path class="m teal" d="M185.500 0V34"/><use href="#line" width="220" height="44.400"/><use class="cur" href="#arrow" x="185" y="32.500" width="12" height="20"/></svg>
      <div class="tip sh-c"><p class="th first"><span>Time</span><em>Events</em><b>%</b></p><p><span><i class="min">Min</i> – May 12 10:00<br>PM, 2022</span><em>6K</em><b>5%</b></p></div>
    </div>
    <div>
      <svg class="spark sh-d coral-line" viewBox="0 0 220 44.400"><path class="m red" d="M24.500 0V34"/><path class="m teal" d="M185.500 0V44.400"/><use href="#line" width="220" height="44.400"/><use class="cur" href="#arrow" x="25" y="32" width="12" height="20"/></svg>
      <div class="tip"><p class="th first"><span>Time</span><em>Events</em><b>%</b></p><p><span><i class="max">Max</i> – May 10 00:00<br>AM, 2022</span><em>16K</em><b>15%</b></p></div>
      <svg class="spark sh-d sh-e coral-line" viewBox="0 0 220 44.400"><path class="m red" d="M24.500 0V44.400"/><path class="m teal" d="M185.500 0V44.400"/><use href="#line" width="220" height="44.400"/><use class="cur" href="#arrow" x="118" y="32.500" width="12" height="20"/></svg>
      <div class="tip sh-f"><p><span>Total</span><em>230K</em><b>100%</b></p><p class="th"><span>Time</span><em>Events</em><b>%</b></p><p><span><i class="max">Max</i> – May 10 00:00<br>AM, 2022</span><em>16K</em><b>15%</b></p><p><span><i class="min">Min</i> – May 12 10:00<br>PM, 2022</span><em>6K</em><b>5%</b></p></div>
    </div>
  </div>
</div>

<section class="flat flat-full">
  <div class="toolbar">
    <span class="count">2 items</span>
    <nav class="tabs"><a class="on">OS</a><a>Browser</a><a>User Agent</a><a>ASN</a><a>IP Address</a></nav>
    <span class="find"><svg class="ic i17"><use href="#search"/></svg>Search</span>
    <svg class="ic i17 gear"><use href="#gear"/></svg>
  </div>
  <div class="table cols-c">
    <div class="head"><span></span><span>OS Family<svg class="ic i-sort"><use href="#sort"/></svg></span><span># of Bad Bot Events</span><span>Attack Intent Distribution</span><span>Bad Bot Reason Code Distribution</span><span>Distinct UAs</span><span>Distinct ASNs</span><span>Distinct IPs</span><span>Unique BFPs</span><span>Unique HFPs</span><span>Unique UFPs</span><span>Bad Bot Traffic</span></div>
    <div class="body">
      <div class="row"><svg class="ic i-right"><use href="#right"/></svg><span>Windows</span><span>207K</span>
        <span class="bar"><i class="brown" style="width:7.9rem"></i><i class="amber" style="width:4.2rem"></i><i class="yellow" style="width:3.3rem"></i><i class="lav" style="width:3.05rem"></i><i class="violet" style="width:1.15rem"></i></span>
        <span class="bar"><i class="purple" style="width:7rem"></i><i class="lav" style="width:4.2rem"></i><i class="pink" style="width:3.2rem"></i><i class="lime" style="width:2.2rem"></i><i class="green" style="width:1.2rem"></i><i class="amber" style="width:.7rem"></i><i class="red" style="width:2.4rem"></i><i class="azure" style="width:2.4rem"></i></span>
        <span>20K</span><span>10K</span><span>1.05M</span><span>230K</span><span>120K</span><span>330K</span>
        <svg class="spark coral-line" viewBox="0 0 220 44.400"><use href="#line" width="220" height="44.400"/></svg></div>
      <div class="row"><svg class="ic i-right"><use href="#right"/></svg><span class="with-menu">MacOS X<svg class="ic i-down"><use href="#down"/></svg></span><span>105K</span>
        <span class="bar low"><i class="brown" style="width:7.9rem"></i><i class="amber" style="width:4.2rem"></i><i class="yellow" style="width:3.3rem"></i><i class="lav" style="width:3.05rem"></i><i class="violet" style="width:1.15rem"></i></span>
        <span class="bar low"><i class="purple" style="width:7rem"></i><i class="lav" style="width:4.2rem"></i><i class="pink" style="width:3.2rem"></i><i class="lime" style="width:2.2rem"></i><i class="green" style="width:1.2rem"></i><i class="amber" style="width:.7rem"></i><i class="red" style="width:2.4rem"></i><i class="azure" style="width:2.4rem"></i></span>
        <span>20K</span><span>10K</span><span>1.05M</span><span>230K</span><span>120K</span><span>330K</span>
        <svg class="spark coral-line" viewBox="0 0 220 44.400"><path class="m slate" d="M118.500 0V32"/><use href="#line" width="220" height="44.400"/><use class="cur" href="#arrow" x="118" y="32" width="12" height="20"/></svg></div>
    </div>
  </div>
  <div class="tip at-full-tip"><p class="th first"><span>Time</span><em>Events</em><b>%</b></p><p><span>May 10 00:00 AM,<br>2022</span><em>16K</em><b>15%</b></p></div>
  <div class="menu at-full-menu"><a><svg class="ic i17"><use href="#funnel-off"/></svg>Filter out</a><a><svg class="ic i17"><use href="#funnel"/></svg>Filter in</a></div>
  <svg class="arrow at-full-arrow"><use href="#arrow"/></svg>
  <svg class="hand at-full-hand"><use href="#hand"/></svg>
</section>
</main>
</body>
</html>
```
FILE: styles.css
```css
/* 1rem is ten layout units; the whole sheet is drawn in those units. */
:root {
  font-size: 15.937px;
  --b: 2px;
  --navy: #0d1c55;
  --label: #6a768c;
  --muted: #9aa4b6;
  --line: #e5e8f4;
  --wash: #f7f8fa;
  --link: #4b74fa;
}
* { box-sizing: border-box; margin: 0; padding: 0; }
body { background: #fefefe; color: var(--navy); font: 1.4rem/2rem Inter, "Liberation Sans", sans-serif; }
em, i { font-style: normal; }
.defs { position: absolute; width: 0; height: 0; }
.canvas { width: 244.4rem; height: 257rem; overflow: hidden; padding: 1.6rem 0 0 1.6rem; }
.columns { display: flex; gap: 2.4rem; height: 175.6rem; }
.column { width: 117.6rem; }

/* colours shared by swatches, bars and markers */
.teal { --c: #41cdc6; } .sky { --c: #57b9fb; } .peri { --c: #6c9bfd; } .blue { --c: #0564fb; }
.purple { --c: #a510a5; } .gold { --c: #ffc414; } .yellow { --c: #ffce4b; } .coral { --c: #fb8080; }
.mist { --c: #ced4e2; } .lav { --c: #9a8cda; } .pink { --c: #f280dc; } .lime { --c: #a6e84b; }
.green { --c: #47d52d; } .amber { --c: #e69b0a; } .red { --c: #c94255; } .ocean { --c: #0569b3; }
.azure { --c: #0574bb; } .indigo { --c: #5442ab; } .orange { --c: #ff8f05; } .brown { --c: #b36205; }
.violet { --c: #6c59cc; } .slate { --c: #9ca6b8; }

/* icons */
.ic { flex: none; fill: none; stroke: #9da7b9; stroke-width: 1.3; overflow: visible; }
.i-sort { width: .6rem; height: 1.2rem; fill: #ced4e2; stroke: none; }
.i13 { width: 1.3rem; height: 1.3rem; stroke-width: 1.1; }
.i17 { width: 1.7rem; height: 1.7rem; }
.i-sd { width: .9rem; height: .6rem; }
.i-right { width: .8rem; height: 1.2rem; stroke-linecap: round; }
.i-down { width: 1.2rem; height: .8rem; stroke-linecap: round; }
.i-up { width: 1rem; height: 1rem; }
.dark { margin-top: -.3rem; stroke: #17203c; }
.arrow, .cur { fill: var(--navy); stroke: #fff; stroke-width: 1; paint-order: stroke; filter: drop-shadow(1px 2px 1.5px rgba(20, 30, 60, .4)); }
.arrow { position: absolute; width: 1.2rem; height: 2rem; overflow: visible; }
.hand { position: absolute; width: 1.8rem; height: 2.2rem; overflow: visible; filter: drop-shadow(1px 2px 1.5px rgba(20, 30, 60, .3)); }

/* stacked bars */
.bar { display: flex; gap: .1rem; height: .8rem; margin-top: .4rem; }
.bar.low { margin-top: .6rem; }
.bar.in1 { margin-left: .1rem; }
.bar.flush { gap: 0; margin: 0; }
.bar i { flex: none; height: 100%; background: var(--c); }

/* sparklines */
.spark { display: block; flex: none; width: 22rem; height: 4.44rem; background: var(--wash); overflow: visible; stroke: #6d788f; }
.spark.small { width: 19.8rem; height: 4rem; }
.spark.bare { background: none; }
.coral-line { stroke: #f98585; }
.m { fill: none; stroke: var(--c); stroke-width: 1; }
.m.thick { stroke-width: 3; }
.m.dash { stroke-dasharray: 3 3; }
.dot { fill: var(--c); stroke: #fff; stroke-width: 1; }

/* malicious bots card */
.bots { position: relative; width: 113.4rem; height: 31.5rem; border: var(--b) solid var(--line); border-radius: .4rem; }
.bots > * { margin-left: calc(-1 * var(--b)); }
.bots-title { display: flex; align-items: center; height: 5.6rem; padding: .15rem 2.4rem 0 2rem; margin-top: calc(-1 * var(--b)); }
.bots-title b { font-size: 1.6rem; font-weight: 500; margin-right: .85rem; }
.select { display: flex; align-items: center; gap: 1.2rem; margin-left: auto; margin-right: .55rem; }
.bots-head { display: grid; grid-template-columns: 19.75rem 24.4rem 12.7rem 1fr; align-items: center; height: 3.6rem; padding-left: 3.25rem; background: var(--wash); }
.bots-head span { display: flex; align-items: center; white-space: nowrap; }
.bots-head .i-sort { margin-right: 1.3rem; fill: #9da7b9; }
.bots-head .i-sd { margin-left: 1.15rem; }
.bots-row { display: grid; grid-template-columns: 3.2rem 14rem 5.75rem 24.4rem 12.65rem 1fr; align-items: center; height: 4.9rem; margin: 0 calc(2rem - var(--b)); border-bottom: var(--b) solid var(--line); }
.bots-row > .i-right { margin-left: .1rem; }
.bots .bots-row { margin-left: calc(2rem - var(--b)); }
.req { display: flex; align-items: center; }
.req .bar { position: absolute; margin: .1rem 0 0 3.95rem; }
.bots .bots-detail { height: 10rem; margin: calc(-1 * var(--b)) calc(-1 * var(--b)) 0 calc(2rem - var(--b)); padding: 2.1rem 1.9rem; border: var(--b) solid var(--line); border-radius: .4rem; background: var(--wash); }
.bots-detail p { display: flex; align-items: center; gap: .75rem; }
.bots-detail strong { display: block; margin-top: .65rem; font-size: 2.4rem; line-height: 2.8rem; font-weight: 700; letter-spacing: .02rem; }

/* boards */
.board { position: relative; }
.board-lists { margin-top: 3.9rem; height: 64.8rem; }
.board-compact { margin-top: 23.65rem; }
.band { height: 5rem; padding-left: 2rem; border: solid var(--line); border-width: var(--b) 0; background: var(--wash); font-size: 1.8rem; font-weight: 400; line-height: 4.85rem; }
.toolbar { display: flex; align-items: center; height: 3.2rem; padding: 0 2.75rem 0 2rem; }
.board > .toolbar { margin: 2.9rem 2rem 0; }
.count { width: 7.35rem; color: var(--muted); }
.tabs { display: flex; }
.tabs a { height: 3.2rem; padding: 0 1.54rem; border: var(--b) solid var(--line); margin-left: calc(-1 * var(--b)); line-height: 2.95rem; color: var(--label); }
.tabs a.on { position: relative; margin: 0; border-color: var(--link); border-radius: .4rem 0 0 .4rem; color: var(--link); }
.tabs a:last-child { border-radius: 0 .4rem .4rem 0; }
.find { display: flex; align-items: center; gap: .75rem; width: 18rem; height: 3.2rem; margin-left: auto; padding-left: .6rem; border: var(--b) solid var(--line); border-radius: .4rem; color: var(--label); }
.hide { display: flex; align-items: center; gap: 1.1rem; width: 12.3rem; margin: 0 0 0 3.2rem; }
.find + .gear { margin-left: 2.75rem; }
.hide + .gear { margin-left: .05rem; }
.add { display: flex; align-items: center; gap: .7rem; height: 2rem; margin: 1.9rem 0 1.8rem 4.75rem; color: var(--link); }
.sticky { margin: 1.6rem 2rem 0; padding: 1.3rem 0; height: 5.8rem; background: #fff; box-shadow: 0 .2rem 1.6rem rgba(30, 45, 100, .07); }

/* tables */
.board .table { position: relative; margin: 0 2rem; }
.head, .row { display: grid; align-items: center; }
.head { height: 3.6rem; padding: 0 2rem; background: var(--wash); font-size: 1.2rem; font-weight: 600; color: var(--label); }
.head span { display: flex; align-items: center; gap: .95rem; white-space: nowrap; }
.cols-a .head, .cols-a .row { grid-template-columns: 3.8rem 25.3rem 25.3rem 25.3rem 1fr; }
.cols-b .head, .cols-b .row { grid-template-columns: 3.8rem 14.4rem 22rem 25.3rem 34.2rem 16rem 16rem 16rem 1fr; }
.cols-c .head, .cols-c .row { grid-template-columns: 3.8rem 14.4rem 22rem 25.3rem 34.2rem 16rem 16rem 16rem 16rem 16rem 16rem 1fr; }
.cols-b .spark { margin-left: .12rem; }
.body { border: solid var(--line); border-width: 0 var(--b) var(--b); border-radius: 0 0 .4rem .4rem; }
.row { height: 4.9rem; margin: 0 calc(2rem - var(--b)); border-bottom: var(--b) solid var(--line); }
.row > .i-right { margin-left: 1rem; }
.row > .i-down { margin-left: .8rem; }
.open { position: relative; margin: 0 calc(-1 * var(--b)); background: #fff; box-shadow: 0 .2rem 1.6rem rgba(30, 45, 100, .08); }
.open .row { margin: 0 2rem; }
.board-top10 .open { box-shadow: 0 .6rem 1.2rem -.2rem rgba(30, 45, 100, .08); }
.detail { display: grid; padding: 2rem 0 0 calc(2.8rem - var(--b)); }
.detail h3 { font-size: 1.2rem; line-height: 1.8rem; font-weight: 700; white-space: nowrap; }
.detail h3 small { font-size: 1.2rem; font-weight: 400; }

.lists { grid-template-columns: 27.9rem 25rem 30.2rem 1fr; height: 32.2rem; }
.kv { width: 23.9rem; }
.kv-b { width: 21rem; }
.kv-c { width: 26.2rem; }
.kv h3 { margin-bottom: 1rem; }
.kv p { display: flex; justify-content: space-between; line-height: 3.2rem; color: var(--label); }
.kv em { color: var(--navy); }
.detail .spark { margin-top: 1.6rem; }

.top10 { grid-template-columns: 35.6rem 38.4rem 1fr; height: 47.1rem; }
.rank { width: 22.6rem; }
.rank-b { width: 18rem; }
.rank-c { width: 17.7rem; }
.rank .bar { margin: 2rem 0 2.2rem; }
.rank-b .bar, .rank-c .bar { margin-bottom: 2rem; }
.rank p { display: flex; align-items: center; line-height: 3.2rem; color: var(--label); white-space: nowrap; }
.rank p i { width: 1rem; height: 1rem; margin-right: 1.2rem; }
.rank p em { margin-left: auto; color: var(--navy); }
.more { display: flex; align-items: center; gap: .85rem; margin-top: 2rem; color: var(--link); }
.more u { text-underline-offset: .25rem; }

.charts { grid-template-columns: 56.7rem 16rem 16rem 1fr; height: 19.7rem; }
.charts-b { grid-template-columns: 45.8rem 20.05rem 19.95rem 1fr; height: 19.75rem; }
.kpis { display: flex; margin: 1.6rem 0 0 .7rem; }
.kpi { width: 16.2rem; white-space: nowrap; }
.kpi strong { display: block; margin: .4rem 0 1rem; font-size: 2.4rem; line-height: 2.8rem; }
.kpi strong small { margin-left: .45rem; font-size: 1.8rem; font-weight: 400; letter-spacing: -.01rem; }
.badge { display: flex; align-items: center; gap: .65rem; width: 7rem; height: 2rem; padding-left: .4rem; border-radius: .5rem; background: #d3f5f1; color: #3db391; font-size: 1.2rem; font-weight: 600; }
.badge .ic { stroke: #3db391; stroke-width: 1.5; }
.was { display: block; margin-top: .25rem; font-size: 1rem; color: #5f6b82; }
.donut { display: grid; width: 12rem; height: 12rem; margin-top: 1.6rem; }
.donut > * { grid-area: 1 / 1; }
.donut svg { width: 12rem; height: 12rem; overflow: visible; }
.donut p { align-self: center; text-align: center; padding-top: .2rem; }
.donut b { display: block; font-size: 1.8rem; font-weight: 600; line-height: 2.2rem; }
.counts { display: flex; margin-top: 2.1rem; }
.counts p { width: 11.8rem; white-space: nowrap; }
.counts strong { display: block; margin-bottom: .3rem; font-size: 2.4rem; line-height: 2.8rem; }
.range { margin-top: .9rem; }

/* tooltips */
.tip { width: 31.2rem; padding: 1.85rem calc(2rem - var(--b)) 1.45rem; border: var(--b) solid var(--line); border-radius: .4rem; background: #fff; box-shadow: 0 .8rem 1.6rem rgba(25, 30, 80, .09); font-size: 1.2rem; line-height: 1.8rem; }
.tip-s { width: 24rem; }
.tip p { display: flex; margin-top: .2rem; color: var(--label); white-space: nowrap; }
.tip p > i { flex: none; width: 1rem; height: 1rem; margin: .4rem .8rem 0 0; background: var(--c); }
.tip span { flex: 1; }
.tip em { color: var(--navy); }
.tip b { width: 7.15rem; text-align: right; font-weight: 700; color: var(--navy); }
.tip h4 { margin: -.4rem 0 .8rem; font-size: 1.4rem; line-height: 2rem; font-weight: 600; }
.tip .th { margin-top: 1rem; }
.tip .th.first { margin-top: .2rem; }
.tip .th > * { color: var(--muted); font-weight: 400; }
.max { color: #c94255; }
.min { color: #41cdc6; }
.bots > .tip, .board > .tip, .flat > .tip { position: absolute; margin: 0; }
.menu { position: absolute; width: 12.35rem; height: 8.8rem; padding: 1.1rem 0 0 2.1rem; border: var(--b) solid var(--line); border-radius: .4rem; background: #fff; box-shadow: 0 .8rem 1.6rem rgba(25, 30, 80, .09); }
.menu a { display: flex; align-items: center; gap: .85rem; height: 3.2rem; }

/* overlay anchors */
.at-bots-hand { left: 3.07rem; top: 16.4rem; }
.at-bots-tip { left: 65.05rem; top: 19.35rem; }
.at-bots-arrow { left: 79.9rem; top: 16.4rem; }
.at-top10-a { left: 47.88rem; top: 21.7rem; }
.at-top10-b { left: 81.08rem; top: 21.7rem; }
.at-top10-c { left: 67.5rem; top: 18.4rem; }
.at-top10-d { left: 98.5rem; top: 18.4rem; }
.at-charts-a { left: 52.7rem; top: 48.15rem; }
.at-charts-b { left: 77.55rem; top: 48.15rem; }
.at-compact-a { left: 46.4rem; top: 48.7rem; }
.at-compact-b { left: 71rem; top: 48.7rem; }
.at-flat-tip { left: 143.2rem; top: 18.95rem; }
.at-full-tip { left: 192.2rem; top: 18.75rem; }
.at-full-menu { left: 12rem; top: 17rem; }
.at-full-arrow { left: 13.6rem; top: 6.7rem; }
.at-full-hand { left: 14.8rem; top: 14.6rem; }

/* full-width tables and sparkline states */
.wide { display: flex; gap: 1.15rem; height: 50.2rem; margin-left: 2rem; }
.wide-main { width: 174.4rem; padding-top: 1.3rem; }
.flat { position: relative; }
.flat .table { margin-top: 1.3rem; }
.flat .body { height: 9.8rem; }
.flat-full { width: 222.4rem; margin-left: 2rem; }
.with-menu { display: flex; align-items: center; gap: 1rem; }
.sparks { display: flex; gap: 1.2rem; }
.sparks-a { margin-top: 2.4rem; }
.sparks-b { margin-top: 6.3rem; }
.sparks-c { margin-top: 3.9rem; }
.apart { margin-left: 3.6rem; }
.apart-c { margin-left: 3.3rem; }
.near-c { margin-left: .3rem; }
.samples { display: flex; gap: 1.2rem; }
.samples > div { width: 31.2rem; }
.samples .tip { margin-top: 1.1rem; height: 9.35rem; }
.samples .spark { margin-top: 0; }
.sh-a { margin-left: 3.55rem; }
.sh-b { margin-left: 5.15rem; }
.samples .sh-b, .samples .sh-e { margin-top: 1.35rem; }
.sh-d { margin-left: 8.55rem; }
.samples .sh-c { margin-top: 2rem; }
.samples .sh-f { height: 15.9rem; }
```
